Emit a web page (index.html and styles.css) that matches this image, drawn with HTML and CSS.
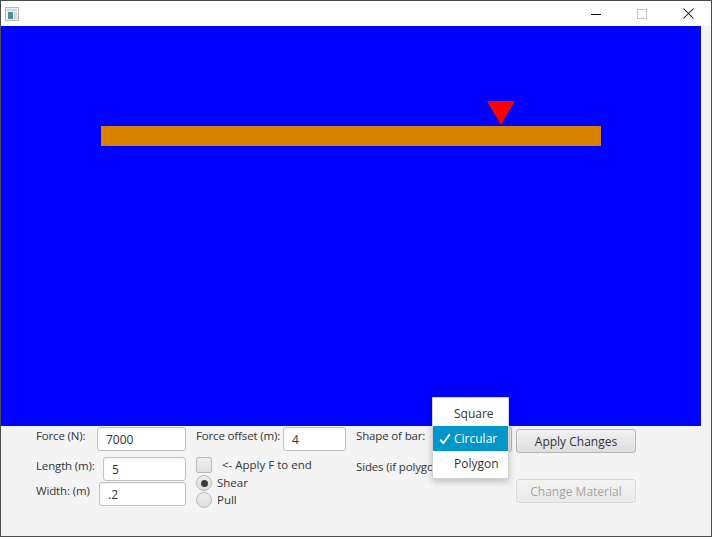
FILE: index.html
```html
<!DOCTYPE html>
<html>
<head>
<meta charset="utf-8">
<link rel="stylesheet" href="styles.css">
</head>
<body>
<div class="window">
  <div class="titlebar">
    <svg class="app-icon" width="14" height="14" viewBox="0 0 14 14">
      <rect x="0.5" y="0.5" width="13" height="13" fill="#f2f2f2" stroke="#b8b8b8"/>
      <rect x="2" y="2" width="10" height="2" fill="#c8d4dc"/>
      <rect x="3" y="5" width="5" height="7" fill="#4f8f94"/>
      <rect x="9" y="5" width="3" height="7" fill="#d0d8de"/>
    </svg>
    <div class="tb-spacer"></div>
    <div class="tb-btn">
      <svg width="10" height="10" viewBox="0 0 10 10"><line x1="0" y1="5.5" x2="10" y2="5.5" stroke="#111" stroke-width="1"/></svg>
    </div>
    <div class="tb-btn">
      <svg width="10" height="10" viewBox="0 0 10 10"><rect x="0.5" y="0.5" width="9" height="9" fill="none" stroke="#c4c4c4" stroke-width="1"/></svg>
    </div>
    <div class="tb-btn">
      <svg width="11" height="11" viewBox="0 0 11 11"><path d="M0.5 0.5 L10.5 10.5 M10.5 0.5 L0.5 10.5" stroke="#111" stroke-width="1.05" fill="none"/></svg>
    </div>
  </div>
  <div class="main">
    <svg class="canvas" width="700" height="400" viewBox="0 0 700 400">
      <rect x="0" y="0" width="700" height="400" fill="#0000ff"/>
      <rect x="100" y="100" width="500" height="20" fill="#d88200"/>
      <polygon points="486,75 514,75 500,99" fill="#ff0000"/>
    </svg>
    <div class="panel">
      <div class="col">
        <div class="row">
          <span class="label">Force (N):</span>
          <div class="field w89">7000</div>
        </div>
        <div class="row r2">
          <span class="label">Length (m):</span>
          <div class="field w83">5</div>
        </div>
        <div class="row r3">
          <span class="label">Width: (m)</span>
          <div class="field w87">.2</div>
        </div>
      </div>
      <div class="col">
        <div class="row">
          <span class="label">Force offset (m):</span>
          <div class="field w63">4</div>
        </div>
        <div class="check-row">
          <span class="checkbox"></span>
          <span class="check-text">&lt;- Apply F to end</span>
        </div>
        <div class="radio-row first">
          <span class="radio selected"></span>
          <span class="radio-text">Shear</span>
        </div>
        <div class="radio-row">
          <span class="radio"></span>
          <span class="radio-text">Pull</span>
        </div>
      </div>
      <div class="col">
        <div class="row">
          <span class="label">Shape of bar:</span>
          <div class="combo"></div>
        </div>
        <div class="row r2">
          <span class="label">Sides (if polygon):</span>
        </div>
      </div>
      <div class="col col4">
        <div class="button">Apply Changes</div>
        <div class="button disabled">Change Material</div>
      </div>
    </div>
  </div>
  <div class="popup">
    <div class="item">Square</div>
    <div class="item selected">
      <svg class="check" width="12" height="12" viewBox="0 0 12 12"><path d="M1.2 6.6 L4.3 10.2 L10.8 1.2" fill="none" stroke="#ffffff" stroke-width="1.9" stroke-linejoin="round"/></svg>Circular
    </div>
    <div class="item">Polygon</div>
  </div>
</div>
</body>
</html>
```
FILE: styles.css
```css
body {
  margin: 0;
  background: #f4f4f4;
}

.window {
  position: relative;
  width: 712px;
  height: 537px;
  box-sizing: border-box;
  border: 1px solid #4c4c4c;
  background: #f4f4f4;
  font-family: "Open Sans", "Noto Sans", sans-serif;
  font-size: 11.5px;
  color: #333333;
  overflow: hidden;
}

.titlebar {
  height: 25px;
  background: #ffffff;
  display: flex;
  align-items: center;
}

.app-icon {
  margin-left: 4px;
  margin-top: 1px;
}

.tb-spacer {
  flex: 1;
}

.tb-btn {
  width: 46px;
  height: 25px;
  display: flex;
  align-items: center;
  justify-content: center;
}

.canvas {
  display: block;
}

.panel {
  display: grid;
  grid-template-columns: 160px 160px 160px 160px;
  padding: 1px 0 0 35px;
}

.col {
  display: flex;
  flex-direction: column;
  width: 150px;
}

.row {
  display: flex;
  justify-content: space-between;
  align-items: flex-start;
}

.row.r2 {
  margin-top: 6px;
}

.row.r3 {
  margin-top: 1px;
}

.label {
  line-height: 16px;
  padding-top: 1px;
  white-space: nowrap;
  letter-spacing: -0.15px;
}

.field {
  flex-shrink: 0;
  height: 24px;
  box-sizing: border-box;
  border: 1px solid #c2c2c2;
  border-radius: 3px;
  background: #ffffff;
  box-shadow: inset 0 1px 2px rgba(0, 0, 0, 0.06);
  padding: 1px 7px 0 8px;
  line-height: 22px;
  font-size: 12px;
}

.w89 { width: 89px; }
.w83 { width: 83px; }
.w87 { width: 87px; }
.w63 { width: 63px; }

.check-row {
  display: flex;
  align-items: center;
  height: 16px;
  margin-top: 6px;
}

.checkbox {
  width: 16px;
  height: 16px;
  box-sizing: border-box;
  border: 1px solid #b9b9b9;
  border-radius: 2px;
  background: linear-gradient(#eeeeee, #e0e0e0);
}

.check-text {
  margin-left: 10px;
  line-height: 16px;
}

.radio-row {
  display: flex;
  align-items: center;
  height: 16px;
  margin-top: 1px;
}

.radio-row.first {
  margin-top: 2px;
}

.radio {
  position: relative;
  width: 16px;
  height: 16px;
  box-sizing: border-box;
  border: 1px solid #b9b9b9;
  border-radius: 50%;
  background: linear-gradient(#eeeeee, #dedede);
}

.radio.selected::after {
  content: "";
  position: absolute;
  left: 3.5px;
  top: 3.5px;
  width: 7px;
  height: 7px;
  border-radius: 50%;
  background: #3a3a3a;
}

.radio-text {
  margin-left: 5px;
  line-height: 16px;
}

.combo {
  flex-shrink: 0;
  width: 80px;
  height: 25px;
  box-sizing: border-box;
  border: 1px solid #b5b5b5;
  border-radius: 3px;
  background: linear-gradient(#f0f0f0, #e0e0e0);
  margin-right: -6px;
}

.col4 {
  padding-top: 2px;
}

.button {
  width: 120px;
  height: 24px;
  box-sizing: border-box;
  border: 1px solid #b5b5b5;
  border-radius: 3px;
  background: linear-gradient(#f2f2f2, #dedede);
  text-align: center;
  line-height: 23px;
  font-size: 12px;
  color: #333333;
}

.button.disabled {
  margin-top: 26px;
  opacity: 0.42;
}

.popup {
  position: absolute;
  left: 431px;
  top: 396px;
  width: 77px;
  box-sizing: border-box;
  background: #ffffff;
  border: 1px solid #d2d2d2;
  padding: 3px 0 2px 0;
  box-shadow: 0 3px 7px rgba(0, 0, 0, 0.22);
}

.item {
  position: relative;
  height: 25px;
  line-height: 25px;
  padding-left: 21px;
  font-size: 12px;
  color: #333333;
}

.item.selected {
  background: #0096c9;
  color: #ffffff;
}

.check {
  position: absolute;
  left: 6px;
  top: 7px;
}
```
